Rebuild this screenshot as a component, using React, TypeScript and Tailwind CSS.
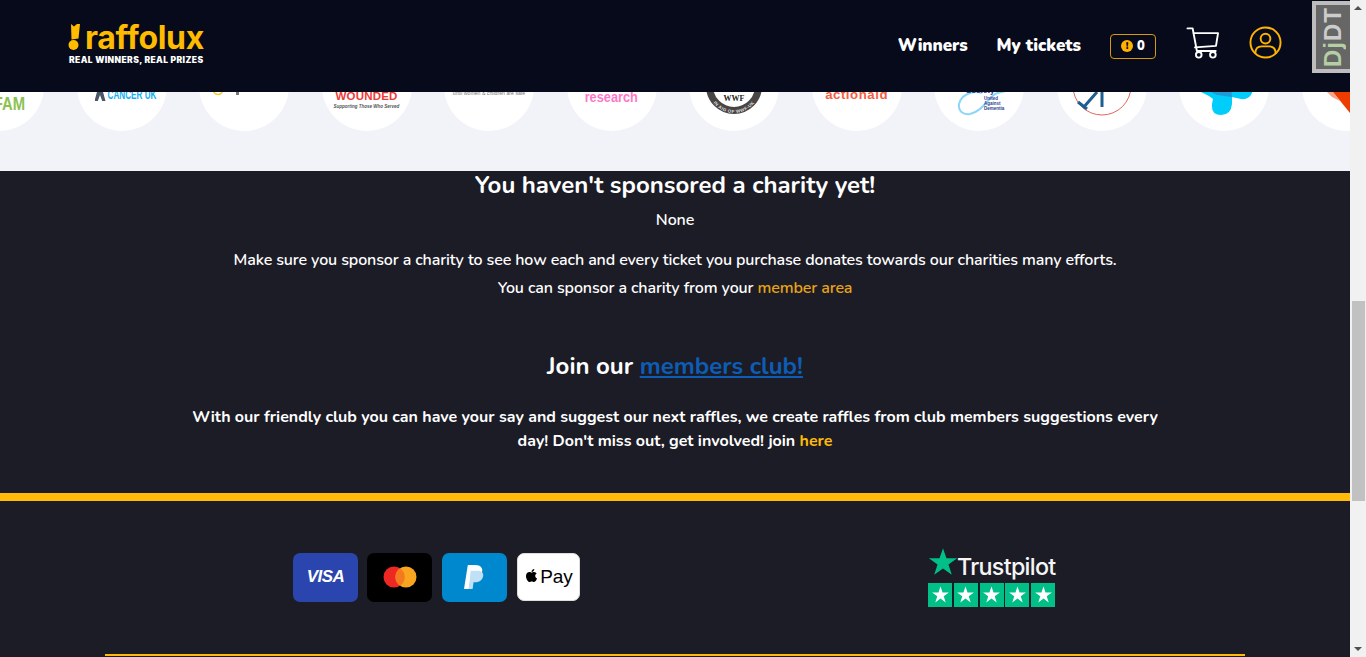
import type { ReactNode } from "react";
import { FaApple } from "react-icons/fa";

const star = "M12 1.500l2.600 7.600h8l-6.500 4.700 2.500 7.700L12 16.700l-6.600 4.800 2.500-7.700L1.400 9.100h8z";

const Header = () => (
  <header className="relative h-[92px] bg-[#060a1a] flex items-center justify-between pl-[68px] pr-[68px] shrink-0">
    <div className="flex flex-col w-[137px] -mt-[6px]">
      <div className="flex items-center h-[30px]">
        <svg width="13" height="26" viewBox="0 0 13 26" className="shrink-0">
          <path d="M3 0l3 2.500L9 0l3 0-1.500 14.500-7 1z" fill="#ffbb00" />
          <circle cx="5.500" cy="21" r="5" fill="#ffbb00" />
        </svg>
        <span className="ml-[4px] pt-[3px] text-[32px] leading-none font-bold text-[#ffbb00] tracking-[-0.3px] font-['Inter',sans-serif]">raffolux</span>
      </div>
      <span className="ml-[1px] text-[8.500px] font-black text-white tracking-[0.4px] leading-[10px] mt-[3px] whitespace-nowrap font-['Inter',sans-serif]">REAL WINNERS, REAL PRIZES</span>
    </div>
    <nav className="flex items-center text-white font-['Nunito','Noto_Sans',sans-serif]">
      <a className="text-[17px] font-black tracking-[-0.1px]">Winners</a>
      <a className="text-[17px] font-black ml-[29px]">My tickets</a>
      <div className="ml-[29px] w-[46px] h-[25px] border border-[#d89a0a] rounded-[4px] flex items-center justify-center gap-[4px]">
        <span className="w-[12px] h-[12px] rounded-full bg-[#ffb300] text-[#060a1a] text-[10px] font-black leading-[12px] text-center">!</span>
        <span className="text-[13px] font-black leading-none">0</span>
      </div>
      <svg width="34" height="32" viewBox="0 0 36 34" fill="none" stroke="#fff" strokeWidth="2" strokeLinejoin="round" strokeLinecap="round" className="ml-[30px] -mt-[6px]">
        <path d="M1.500 1.500h5.500l4.500 24h20" />
        <path d="M8 6.500h26l-2.200 13.500-22.300 1.700" />
        <circle cx="13.500" cy="29.500" r="3" />
        <circle cx="28.500" cy="29.500" r="3" />
      </svg>
      <svg width="33" height="33" viewBox="0 0 34 34" fill="none" stroke="#ffb300" strokeWidth="2" className="ml-[29px] -mt-[7px]">
        <circle cx="17" cy="17" r="15.500" />
        <circle cx="17" cy="13" r="5" />
        <path d="M6.500 28.500c0-6 3.500-7.500 6.500-7.500h8c3 0 6.500 1.500 6.500 7.500" />
      </svg>
    </nav>
    <div className="absolute right-0 top-[1px] w-[38px] h-[72px] border-4 border-r-0 border-[#bdbdbd] bg-[#666] flex items-center justify-center">
      <span className="[writing-mode:vertical-rl] rotate-180 text-[24px] font-bold leading-none tracking-[1px] text-[#ccc] font-['Liberation_Sans',sans-serif]">
        <span className="text-[#b4cfa4]">Dj</span>DT
      </span>
    </div>
  </header>
);

const Charities = () => (
  <div className="h-[79px] bg-[#f2f3f8] overflow-hidden flex items-end gap-[32.500px] pb-[40px] shrink-0">
    <div className="-ml-[46px] w-[90px] h-[90px] rounded-full bg-white shrink-0 flex flex-col items-center justify-end pb-[18px]">
      <span className="text-[19px] font-bold leading-none text-[#8cc152] scale-x-[0.78] font-['Liberation_Sans',sans-serif]">OXFAM</span>
    </div>
    <div className="w-[90px] h-[90px] rounded-full bg-white shrink-0 flex flex-col items-center justify-end pb-[30px]">
      <div className="flex items-end gap-[3px] ml-[6px] leading-none">
        <span className="w-[11px] h-[12px] bg-[#4a5568] [clip-path:polygon(0_100%,30%_0,70%_0,100%_100%,70%_100%,50%_50%,30%_100%)]"></span>
        <span className="w-[46px] flex justify-center">
          <span className="text-[12px] font-bold text-[#16b1ef] whitespace-nowrap scale-x-[0.68] font-['Liberation_Sans',sans-serif]">CANCER UK</span>
        </span>
      </div>
    </div>
    <div className="w-[90px] h-[90px] rounded-full bg-white shrink-0 flex flex-col items-center justify-end pb-[36px]">
      <svg width="34" height="8" viewBox="0 0 34 8" fill="none" className="-ml-[30px]">
        <circle cx="6" cy="3" r="4.500" stroke="#f6c927" strokeWidth="1.500" />
        <rect x="24" y="5" width="3" height="3" fill="#777" />
      </svg>
    </div>
    <div className="w-[90px] h-[90px] rounded-full bg-white shrink-0 flex flex-col items-center justify-end pb-[22px] leading-none font-['Liberation_Sans',sans-serif]">
      <span className="text-[10px] font-bold text-[#ee3a36] whitespace-nowrap">WALKING WITH THE</span>
      <span className="text-[11.500px] font-black text-[#ee3a36] tracking-[0.2px] whitespace-nowrap -mb-[1px]">WOUNDED</span>
      <span className="text-[4.500px] font-bold text-[#555] whitespace-nowrap mt-[3px] italic">Supporting Those Who Served</span>
    </div>
    <div className="w-[90px] h-[90px] rounded-full bg-white shrink-0 flex flex-col items-center justify-end pb-[35px] leading-none font-['Liberation_Sans',sans-serif]">
      <span className="text-[5.200px] text-[#777] whitespace-nowrap">until women &amp; children are safe</span>
    </div>
    <div className="w-[90px] h-[90px] rounded-full bg-white shrink-0 flex flex-col items-center justify-end pb-[27px] leading-none font-['Liberation_Sans',sans-serif]">
      <span className="text-[14.500px] font-bold text-[#ff78c8] scale-x-[0.88] whitespace-nowrap">research</span>
    </div>
    <div className="w-[90px] h-[90px] rounded-full bg-white shrink-0">
      <svg width="90" height="90" viewBox="0 0 90 90">
        <defs>
          <path id="ring" d="M21 56 A26 26 0 0 0 69 56" fill="none" />
        </defs>
        <circle cx="45" cy="45" r="24.500" fill="#fff" stroke="#4a4545" strokeWidth="7" />
        <text x="45" y="60" textAnchor="middle" fontSize="8" fontWeight="700" fill="#222" fontFamily="Liberation Serif, serif">WWF</text>
        <text fontSize="4.500" fontWeight="700" fill="#ddd" fontFamily="Liberation Sans, sans-serif" letterSpacing="0.4" textAnchor="middle">
          <textPath href="#ring" startOffset="50%">IN AID OF WWF-UK</textPath>
        </text>
      </svg>
    </div>
    <div className="w-[90px] h-[90px] rounded-full bg-white shrink-0 flex flex-col items-center justify-end pb-[30px] leading-none font-['Liberation_Sans',sans-serif]">
      <span className="text-[12px] font-bold text-[#f4603f] tracking-[0.5px] whitespace-nowrap scale-x-[1.1]">actionaid</span>
    </div>
    <div className="w-[90px] h-[90px] rounded-full bg-white shrink-0">
      <svg width="90" height="90" viewBox="0 0 90 90" fill="none">
        <path d="M48 52C38 49 27 54 25 63c-1 7 4 11 11 10 11-2 17-14 25-20 4-2 7-2 11-3" stroke="#8dd6f8" strokeWidth="2" />
        <text x="32" y="52" fontSize="8" fontWeight="700" fill="#2e3f8f" fontFamily="Liberation Sans, sans-serif">Society</text>
        <text fontSize="4.500" fontWeight="700" fill="#2e3f8f" fontFamily="Liberation Sans, sans-serif">
          <tspan x="50" y="59">United</tspan>
          <tspan x="50" y="64">Against</tspan>
          <tspan x="50" y="69">Dementia</tspan>
        </text>
      </svg>
    </div>
    <div className="w-[90px] h-[90px] rounded-full bg-white shrink-0">
      <svg width="90" height="90" viewBox="0 0 90 90" fill="none">
        <path d="M16 45a29 29 0 0 0 58 0" stroke="#e2675c" strokeWidth="1" />
        <path d="M45 51v15M40 51L26 67M21 61l9 7" stroke="#1d5f8e" strokeWidth="3" />
      </svg>
    </div>
    <div className="w-[90px] h-[90px] rounded-full bg-white shrink-0">
      <svg width="90" height="90" viewBox="0 0 90 90" fill="none">
        <path d="M20 45H73V52Q70 59 62 58L53 56V63Q52 74 42 74Q32 74 33 63L34 58L30 55L20 50Z" fill="#00cdf9" />
        <path d="M20 45H52L53 56L38 54Z" fill="#1f9ad6" />
      </svg>
    </div>
    <div className="w-[90px] h-[90px] rounded-full bg-white shrink-0">
      <svg width="90" height="90" viewBox="0 0 90 90" fill="none">
        <path d="M25 51L31 51L38 60L30 56Z" fill="#f9a58a" />
        <path d="M31 40L31 51L48 72L48 40Z" fill="#ee3c00" />
      </svg>
    </div>
  </div>
);

const PayCard = ({ bg, children }: { bg: string; children: ReactNode }) => (
  <div className={`w-[65px] h-[49px] rounded-[7px] flex items-center justify-center ${bg}`}>{children}</div>
);

const Footer = () => (
  <div className="flex items-center h-[148px] mt-[2px] shrink-0">
    <div className="w-[293px] shrink-0"></div>
    <div className="flex gap-[10px] w-[287px]">
      <PayCard bg="bg-[#2a45ad]">
        <span className="text-[17px] font-bold italic text-white tracking-[-0.5px] font-['Liberation_Sans',sans-serif]">VISA</span>
      </PayCard>
      <div className="-ml-px">
        <PayCard bg="bg-black">
          <svg width="34" height="22" viewBox="0 0 34 22">
            <circle cx="11" cy="11" r="10.500" fill="#ee2722" />
            <circle cx="23" cy="11" r="10.500" fill="#f9a51f" />
            <path d="M17 2.200a10.500 10.500 0 0 1 0 17.600a10.500 10.500 0 0 1 0-17.600z" fill="#f47a20" />
          </svg>
        </PayCard>
      </div>
      <PayCard bg="bg-[#0088cf]">
        <svg width="21" height="25" viewBox="0 0 22 26">
          <path d="M4 0h8c5 0 8 3 7 7-1 5-5 8-10 8H7l-2 10H0z" fill="#fff" />
          <path d="M7 6h7c4 0 7 2 6 6-1 4-4 6-8 6h-2l-1 7H5z" fill="#bfe0f5" />
        </svg>
      </PayCard>
      <div className="w-[63px] h-[48px] rounded-[7px] bg-white border border-[#ddd] flex items-center justify-center gap-[1px] text-black">
        <FaApple className="w-[15px] h-[15px] -mt-[2px]" />
        <span className="text-[19px] leading-none font-['Liberation_Sans',sans-serif]">Pay</span>
      </div>
    </div>
    <div className="ml-[348px] w-[127px] flex flex-col -mt-[1px]">
      <div className="flex items-end h-[30px]">
        <svg width="32" height="31" viewBox="0 0 24 23" className="shrink-0 -ml-[1px]">
          <path d={star} fill="#00bf87" />
        </svg>
        <span className="ml-[-2px] -mb-[2px] text-[23.300px] leading-[24px] font-medium text-[#f5f5f5] tracking-[-0.7px] font-['Inter',sans-serif]">Trustpilot</span>
      </div>
      <div className="flex justify-between mt-[6px]">
        {[1, 2, 3, 4, 5].map((n) => (
          <div key={n} className="w-[24px] h-[24px] bg-[#00bf87] flex items-center justify-center">
            <svg width="19" height="19" viewBox="0 0 24 23">
              <path d={star} fill="#fff" />
            </svg>
          </div>
        ))}
      </div>
    </div>
  </div>
);

const Scrollbar = () => (
  <div className="w-[16px] h-full bg-[#f1f1f1] flex flex-col items-center shrink-0">
    <span className="w-0 h-0 mt-[6px] border-x-[4px] border-x-transparent border-b-[4px] border-b-[#505050]"></span>
    <div className="w-[13px] h-[200px] bg-[#c1c1c1] mt-[291px] ml-[1px]"></div>
    <span className="w-0 h-0 mt-auto mb-[6px] border-x-[4px] border-x-transparent border-t-[4px] border-t-[#505050]"></span>
  </div>
);

export default function App() {
  return (
    <div className="flex h-[657px] w-[1366px] overflow-hidden font-['Nunito','Noto_Sans',sans-serif]">
      <div className="w-[1350px] flex flex-col">
        <Header />
        <Charities />
        <main className="flex-1 bg-[#1c1c26] text-white flex flex-col">
          <section className="flex flex-col items-center text-center h-[322px] shrink-0">
            <h2 className="text-[24px] font-bold leading-[30px] mt-[-1px]">You haven't sponsored a charity yet!</h2>
            <p className="text-[16px] font-semibold tracking-[-0.12px] leading-[24px] mt-[8px]">None</p>
            <p className="text-[16px] font-semibold tracking-[-0.12px] leading-[24px] mt-[16px]">Make sure you sponsor a charity to see how each and every ticket you purchase donates towards our charities many efforts.</p>
            <p className="text-[16px] font-semibold tracking-[-0.12px] leading-[24px] mt-[4px]">You can sponsor a charity from your <a className="text-[#e8a317]">member area</a></p>
            <h2 className="text-[24px] font-bold leading-[30px] mt-[51px]">Join our <a className="text-[#0d5cb5] underline">members club!</a></h2>
            <p className="text-[16px] font-bold leading-[24px] mt-[24px] w-[980px]">With our friendly club you can have your say and suggest our next raffles, we create raffles from club members suggestions every day! Don't miss out, get involved! join <a className="text-[#ffbb0a]">here</a></p>
          </section>
          <div className="h-[8px] bg-[#ffbb0a] shrink-0"></div>
          <Footer />
          <div className="h-[2px] w-[1140px] ml-[105px] bg-[#ffbb0a] mt-[3px] shrink-0"></div>
        </main>
      </div>
      <Scrollbar />
    </div>
  );
}
